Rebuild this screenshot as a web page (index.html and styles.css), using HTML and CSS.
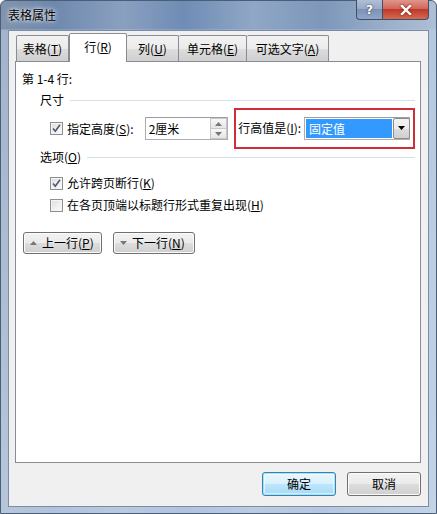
FILE: index.html
```html
<!DOCTYPE html>
<html lang="zh-CN">
<head>
<meta charset="utf-8">
<title>表格属性</title>
<link rel="stylesheet" href="styles.css">
</head>
<body>
<div class="window">
  <div class="titlebar">
    <span class="title">表格属性</span>
    <div class="caption-btns">
      <div class="cap help">?</div>
      <div class="cap close">
        <svg width="12" height="10" viewBox="0 0 12 10"><path d="M2 1 L10 9 M10 1 L2 9" stroke="#fff" stroke-width="2.4" stroke-linecap="square" fill="none"/></svg>
      </div>
    </div>
  </div>
  <div class="client">
    <div class="tabs">
      <div class="tab w1">表格(<u>T</u>)</div>
      <div class="tab active w2">行(<u>R</u>)</div>
      <div class="tab w3">列(<u>U</u>)</div>
      <div class="tab w4">单元格(<u>E</u>)</div>
      <div class="tab w5">可选文字(<u>A</u>)</div>
    </div>
    <div class="panel">
      <div class="rows-label">第 1-4 行:</div>
      <div class="group-head"><span>尺寸</span><i class="rule"></i></div>
      <div class="size-row">
        <span class="cb">
          <svg width="13" height="13" viewBox="0 0 13 13"><path d="M3 6.5 L5.3 9.2 L10 2.8" stroke="#4a5a6e" stroke-width="1.6" fill="none"/></svg>
        </span>
        <span class="lbl">指定高度(<u>S</u>):</span>
        <div class="spin">
          <span class="spin-val">2厘米</span>
          <div class="spin-btns">
            <b class="up"><svg width="7" height="4" viewBox="0 0 7 4"><path d="M0 4 L3.5 0 L7 4Z" fill="#777"/></svg></b>
            <b class="down"><svg width="7" height="4" viewBox="0 0 7 4"><path d="M0 0 L3.5 4 L7 0Z" fill="#777"/></svg></b>
          </div>
        </div>
        <div class="highlight">
          <span class="lbl">行高值是(<u>I</u>):</span>
          <div class="combo">
            <span class="sel">固定值</span>
            <span class="dd"><svg width="7" height="4" viewBox="0 0 7 4"><path d="M0 0 L7 0 L3.5 4Z" fill="#000"/></svg></span>
          </div>
        </div>
      </div>
      <div class="group-head second"><span>选项(<u>O</u>)</span><i class="rule"></i></div>
      <div class="check-row">
        <span class="cb">
          <svg width="13" height="13" viewBox="0 0 13 13"><path d="M3 6.5 L5.3 9.2 L10 2.8" stroke="#4a5a6e" stroke-width="1.6" fill="none"/></svg>
        </span>
        <span class="lbl">允许跨页断行(<u>K</u>)</span>
      </div>
      <div class="check-row">
        <span class="cb"></span>
        <span class="lbl">在各页顶端以标题行形式重复出现(<u>H</u>)</span>
      </div>
      <div class="nav-row">
        <button class="btn nav prev"><svg width="7" height="4" viewBox="0 0 7 4"><path d="M0 4 L3.5 0 L7 4Z" fill="#777"/></svg><span>上一行(<u>P</u>)</span></button>
        <button class="btn nav next"><svg width="7" height="4" viewBox="0 0 7 4"><path d="M0 0 L3.5 4 L7 0Z" fill="#777"/></svg><span>下一行(<u>N</u>)</span></button>
      </div>
    </div>
    <div class="footer">
      <button class="btn default">确定</button>
      <button class="btn">取消</button>
    </div>
  </div>
</div>
</body>
</html>
```
FILE: styles.css
```css
* { box-sizing: border-box; }
html, body { margin: 0; padding: 0; }
body {
  width: 437px;
  height: 514px;
  overflow: hidden;
  font-family: "Noto Sans CJK SC", "Microsoft YaHei", sans-serif;
  font-size: 12px;
  color: #000;
}
u { text-decoration: underline; text-underline-offset: 1px; }

.window {
  width: 437px;
  height: 514px;
  border: 1px solid #4a5e78;
  border-radius: 6px 6px 0 0;
  padding: 0 7px 6px 7px;
  display: flex;
  flex-direction: column;
  background:
    linear-gradient(180deg, rgba(255,255,255,0) 0px, rgba(255,255,255,0) 28px, rgba(190,208,230,0.55) 29px, rgba(205,220,238,0.7) 100%),
    linear-gradient(90deg, #8193ad 0%, #6e88ad 12%, #8aa0c0 28%, #6f8cb5 42%, #90a7c6 58%, #7d97ba 74%, #9cb1cc 90%, #aebfd5 100%);
}

.titlebar {
  height: 29px;
  display: flex;
  align-items: flex-start;
  flex: none;
}
.title {
  margin-top: 5px;
  line-height: 18px;
  font-size: 12px;
  color: #000;
  text-shadow: 0 0 6px rgba(255,255,255,0.9), 0 0 3px rgba(255,255,255,0.9);
}
.caption-btns {
  margin-left: auto;
  display: flex;
  margin-top: -1px;
}
.cap {
  height: 20px;
  display: flex;
  align-items: center;
  justify-content: center;
  border: 1px solid #3f4f66;
  border-top: none;
}
.help {
  width: 26px;
  border-radius: 0 0 0 4px;
  border-right: none;
  color: #fff;
  font-family: "DejaVu Sans", sans-serif;
  font-weight: bold;
  font-size: 12px;
  text-shadow: 0 0 2px #223;
  background: linear-gradient(180deg, #b1c0d6 0%, #98aac6 45%, #7d92b4 50%, #8ea6c9 100%);
}
.close {
  width: 47px;
  border-radius: 0 0 4px 0;
  background: linear-gradient(180deg, #e0968b 0%, #d0685a 45%, #c0392b 50%, #d46a52 100%);
}
.close svg { filter: drop-shadow(0 0 1px #6a1a10); }

.client {
  flex: 1;
  background: #f0f0f0;
  border: 1px solid #7b8ca4;
  display: flex;
  flex-direction: column;
  padding: 2px 7px 0 6px;
}

.tabs {
  display: flex;
  align-items: flex-end;
  height: 29px;
  margin-bottom: -1px;
  padding-left: 1px;
  position: relative;
  z-index: 1;
}
.tab {
  height: 26px;
  margin-bottom: 1px;
  border: 1px solid #898c95;
  border-bottom: none;
  border-left: none;
  background: linear-gradient(180deg, #f2f2f2 0%, #ebebeb 50%, #dddddd 51%, #cfcfcf 100%);
  display: flex;
  align-items: center;
  justify-content: center;
  line-height: 16px;
  border-radius: 2px 2px 0 0;
}
.tab.w1 { width: 53px; border-left: 1px solid #898c95; }
.tab.w2 { width: 58px; }
.tab.w3 { width: 52px; }
.tab.w4 { width: 68px; }
.tab.w5 { width: 82px; }
.tab.active {
  height: 29px;
  margin-bottom: 0;
  background: #fff;
  border-left: 1px solid #898c95;
  padding-bottom: 2px;
}

.panel {
  height: 402px;
  background: #fff;
  border: 1px solid #898c95;
  padding: 0 5px 0 6px;
  flex: none;
}
.rows-label {
  margin-top: 9px;
  line-height: 16px;
}
.group-head {
  display: flex;
  align-items: center;
  margin-left: 18px;
  line-height: 16px;
  margin-top: 5px;
}
.group-head.second { margin-top: 0; }
.group-head .rule {
  flex: 1;
  height: 2px;
  border-top: 1px solid #d5dfe5;
  border-bottom: 1px solid #ffffff;
  margin-left: 6px;
  margin-top: 1px;
}
.size-row {
  display: flex;
  align-items: center;
  height: 41px;
  padding-left: 28px;
}
.cb {
  width: 13px;
  height: 13px;
  border: 1px solid #8e8f8f;
  background: linear-gradient(135deg, #dcdcdc 0%, #f2f2f2 60%, #fbfbfb 100%);
  box-shadow: inset 0 0 0 1px #f4f4f4;
  flex: none;
  display: flex;
  align-items: center;
  justify-content: center;
  margin-right: 4px;
}
.cb svg { margin: -1px; }
.lbl { line-height: 16px; white-space: nowrap; }

.spin {
  width: 85px;
  height: 23px;
  margin-left: 11px;
  border: 1px solid #abadb3;
  border-top-color: #9a9ca2;
  background: #fff;
  display: flex;
  align-items: center;
  padding-left: 3px;
}
.spin-val { flex: 1; line-height: 16px; }
.spin-btns {
  width: 17px;
  height: 21px;
  display: flex;
  flex-direction: column;
}
.spin-btns b {
  flex: 1;
  display: flex;
  align-items: center;
  justify-content: center;
  border: 1px solid #c8c8c8;
  background: linear-gradient(180deg, #f7f7f7, #e6e6e6);
}
.spin-btns b.down { border-top: none; }

.highlight {
  margin-left: 6px;
  width: 184px;
  height: 41px;
  border: 2px solid #cd2e3a;
  display: flex;
  align-items: center;
  padding: 0 3px 1px 2px;
}
.highlight .combo { margin-left: auto; }
.combo {
  width: 106px;
  height: 23px;
  border: 1px solid #abadb3;
  border-top-color: #9a9ca2;
  background: #fff;
  display: flex;
  align-items: stretch;
  padding: 1px 0 1px 1px;
}
.sel {
  flex: 1;
  background: #3399ff;
  color: #fff;
  line-height: 19px;
  padding-left: 3px;
  margin-right: 1px;
}
.dd {
  width: 17px;
  margin: -1px -1px -1px 0;
  border: 1px solid #8d8d8d;
  border-radius: 2px;
  background: linear-gradient(180deg, #f3f3f3 0%, #ebebeb 50%, #dddddd 51%, #cfcfcf 100%);
  display: flex;
  align-items: center;
  justify-content: center;
}

.check-row {
  display: flex;
  align-items: center;
  height: 22px;
  padding-left: 28px;
}
.group-head + .check-row { margin-top: 7px; }

.nav-row {
  display: flex;
  gap: 11px;
  margin-top: 16px;
  padding-left: 1px;
}
.btn {
  font-family: inherit;
  font-size: 12px;
  color: #000;
  height: 22px;
  border: 1px solid #707070;
  border-radius: 3px;
  background: linear-gradient(180deg, #f2f2f2 0%, #ebebeb 50%, #dddddd 51%, #cfcfcf 100%);
  box-shadow: inset 0 0 0 1px #fbfbfb;
  display: flex;
  align-items: center;
  justify-content: center;
  padding: 0;
  line-height: 16px;
}
.nav { justify-content: flex-start; padding-left: 6px; }
.nav svg { margin-right: 5px; }
.prev { width: 79px; }
.next { width: 82px; }

.footer {
  display: flex;
  justify-content: flex-end;
  gap: 11px;
  padding-top: 9px;
}
.footer .btn { width: 74px; height: 24px; }
.footer .btn.default {
  border-color: #3c7fb1;
  box-shadow: inset 0 0 0 1px #9de6f5, inset 0 0 0 2px rgba(255,255,255,0.5);
  background: linear-gradient(180deg, #eaf6fd 0%, #d9f0fc 50%, #bee6fd 51%, #a7d9f5 100%);
}
```
